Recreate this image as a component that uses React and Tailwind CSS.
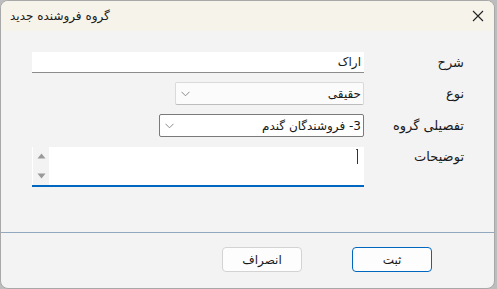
import React from "react";

const AR = { fontFamily: '"DejaVu Sans", "Noto Sans", sans-serif' };

function Chevron() {
  return (
    <svg width="9" height="6" viewBox="0 0 9 6" className="shrink-0">
      <path d="M0.5 0.8 L4.5 4.8 L8.5 0.8" fill="none" stroke="#8a8a8a" strokeWidth="1" />
    </svg>
  );
}

export default function App() {
  return (
    <div className="w-[497px] h-[289px] bg-[#bdbdbd] overflow-hidden">
      <div className="w-[495px] h-[289px] flex flex-col rounded-[8px] border border-[#a8a8a8] bg-[#f3f3f3] overflow-hidden">
        {/* title bar */}
        <div className="h-[30px] shrink-0 bg-[#f6f3eb] flex items-center justify-between pl-[9px] pr-[8px]">
          <div dir="rtl" className="text-[12px] text-[#1a1a1a] leading-none" style={AR}>
            گروه فروشنده جدید
          </div>
          <svg width="12" height="12" viewBox="0 0 12 12" className="mr-[2px]">
            <path d="M1 1 L11 11 M11 1 L1 11" stroke="#222" strokeWidth="1.1" />
          </svg>
        </div>

        {/* form */}
        <div dir="rtl" className="flex-1 flex flex-col gap-[9px] pt-[21px] pr-[30px] pl-[31px]" style={AR}>
          <div className="flex items-center h-[21px]">
            <div className="w-[100px] text-[13px] text-[#1a1a1a]">شرح</div>
            <div className="flex-1 h-[21px] bg-white border-b border-[#8c8c8c] flex items-center pr-[3px] text-[12px] text-[#1a1a1a]">
              اراک
            </div>
          </div>
          <div className="flex items-center h-[23px]">
            <div className="w-[100px] text-[13px] text-[#1a1a1a]">نوع</div>
            <div className="w-[189px] h-[23px] bg-[#fbfbfb] border border-[#dadada] border-b-[#bdbdbd] rounded-[2px] flex items-center justify-between pr-[2px] pl-[5px] text-[12px] text-[#1a1a1a]">
              <span>حقیقی</span>
              <Chevron />
            </div>
          </div>
          <div className="flex items-center h-[23px]">
            <div className="w-[100px] text-[13px] text-[#1a1a1a]">تفصیلی گروه</div>
            <div className="w-[205px] h-[23px] bg-white border border-[#7a7a7a] rounded-[2px] flex items-center justify-between pr-[2px] pl-[5px] text-[12px] text-[#1a1a1a]">
              <span>3- فروشندگان گندم</span>
              <Chevron />
            </div>
          </div>
          <div className="flex items-start h-[40px] mt-[1px]">
            <div className="w-[100px] text-[13px] text-[#1a1a1a] leading-[20px]">توضیحات</div>
            <div className="flex-1 h-[40px] bg-white border-b-2 border-[#0067c0] flex justify-between">
              <div className="pr-[5px] pt-[2px]">
                <div className="relative w-[3px] h-[15px]">
                  <div className="absolute left-[1px] top-0 w-[1px] h-[15px] bg-[#333]" />
                  <div className="absolute left-0 top-0 w-[1px] h-[1px] bg-[#555]" />
                </div>
              </div>
              <div className="w-[16px] h-full bg-[#f3f3f3] flex flex-col items-center justify-between py-[6px] ml-[1px]">
                <svg width="9" height="6" viewBox="0 0 9 6">
                  <path d="M0.5 5.5 L4.5 0.5 L8.5 5.5 Z" fill="#9a9a9a" />
                </svg>
                <svg width="9" height="6" viewBox="0 0 9 6">
                  <path d="M0.5 0.5 L8.5 0.5 L4.5 5.5 Z" fill="#9a9a9a" />
                </svg>
              </div>
            </div>
          </div>
        </div>

        {/* footer */}
        <div className="h-[56px] shrink-0 border-t border-[#92a8be] flex justify-end items-start pt-[14px] pr-[62px] gap-[50px]" dir="ltr" style={AR}>
          <button className="w-[80px] h-[25px] bg-[#fdfdfd] border border-[#d3d3d3] rounded-[4px] text-[12px] text-[#1a1a1a] flex items-center justify-center">
            انصراف
          </button>
          <button className="w-[80px] h-[25px] bg-[#fdfdfd] border border-[#0067c0] rounded-[4px] text-[12px] text-[#1a1a1a] flex items-center justify-center">
            ثبت
          </button>
        </div>
      </div>
    </div>
  );
}
